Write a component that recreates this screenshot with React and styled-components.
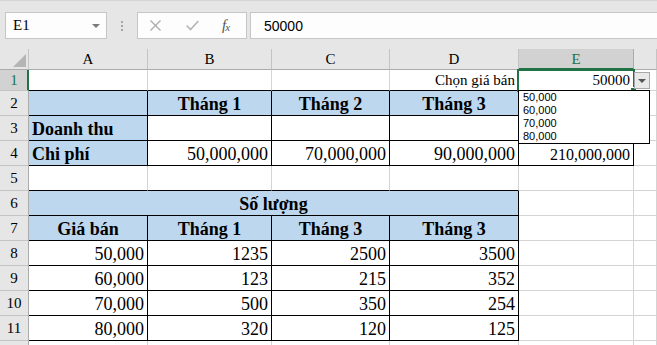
import React from 'react';
import styled, { createGlobalStyle } from 'styled-components';

const GRID = '#d4d4d4';
const HEAD_LINE = '#c4c4c4';
const GREEN = '#217346';
const BLUE = '#bdd7ee';

const GlobalStyle = createGlobalStyle`
  html, body { margin: 0; padding: 0; background: #fff; overflow: hidden; }
  body { font-family: "Liberation Serif", "Times New Roman", serif; color: #000; }
`;

const Page = styled.div`
  width: 657px;
  height: 345px;
  overflow: hidden;
  display: flex;
  flex-direction: column;
`;

/* ---------- formula bar ---------- */

const Toolbar = styled.div`
  height: 49px;
  flex: none;
  box-sizing: border-box;
  background: #e6e6e6;
  border-top: 1px solid #d6d6d6;
  padding-top: 11px;
  display: flex;
  align-items: flex-start;
`;

const NameBox = styled.div`
  margin-left: 5px;
  width: 102px;
  height: 27px;
  box-sizing: border-box;
  border: 1px solid #c6c6c6;
  background: #fdfdfd;
  display: flex;
  align-items: center;
  justify-content: space-between;
  padding: 0 6px 0 7px;
  font-size: 15px;
`;

const Grip = styled.div`
  width: 30px;
  height: 27px;
  display: flex;
  flex-direction: column;
  align-items: center;
  justify-content: center;
  gap: 2px;

  span {
    width: 2px;
    height: 2px;
    background: #a6a6a6;
  }
`;

const FxBox = styled.div`
  width: 110px;
  height: 27px;
  box-sizing: border-box;
  border: 1px solid #c6c6c6;
  background: #fdfdfd;
  display: flex;
  align-items: center;
  padding-left: 12px;
`;

const FxButton = styled.div`
  width: ${p => p.$w}px;
  display: flex;
  align-items: center;
`;

const FxLabel = styled.i`
  font-family: "Liberation Serif", serif;
  font-size: 15px;
  color: #555;
  letter-spacing: -1px;

  sub {
    font-size: 11px;
    vertical-align: -1px;
  }
`;

const FormulaInput = styled.div`
  flex: 1;
  margin-left: 3px;
  height: 27px;
  box-sizing: border-box;
  border: 1px solid #c6c6c6;
  border-right: none;
  background: #fdfdfd;
  display: flex;
  align-items: center;
  padding-left: 13px;
  font-family: "Liberation Sans", Arial, sans-serif;
  font-size: 14px;
`;

/* ---------- sheet ---------- */

const Sheet = styled.div`
  position: relative;
  display: grid;
  grid-template-columns: 29px 119px 124px 118px 129px 115px 1fr;
  grid-template-rows: 21px 21px repeat(11, 25px);
`;

const Corner = styled.div`
  box-sizing: border-box;
  background: #e6e6e6;
  border-right: 1px solid ${HEAD_LINE};
  border-bottom: 1px solid #ababab;
  display: flex;
  align-items: flex-end;
  justify-content: flex-end;
  padding: 0 2px 2px 0;
`;

const ColHead = styled.div`
  box-sizing: border-box;
  background: ${p => (p.$active ? '#d2d2d2' : '#e6e6e6')};
  color: ${p => (p.$active ? GREEN : '#000')};
  border-right: 1px solid ${p => (p.$active ? '#ababab' : HEAD_LINE)};
  border-bottom: ${p => (p.$active ? `2px solid ${GREEN}` : '1px solid #ababab')};
  display: flex;
  align-items: center;
  justify-content: center;
  font-size: 15px;
  line-height: 20px;
`;

const RowHead = styled.div`
  box-sizing: border-box;
  background: ${p => (p.$active ? '#d2d2d2' : '#e6e6e6')};
  color: ${p => (p.$active ? GREEN : '#000')};
  border-right: ${p => (p.$active ? `2px solid ${GREEN}` : '1px solid #ababab')};
  border-bottom: 1px solid ${HEAD_LINE};
  display: flex;
  align-items: center;
  justify-content: center;
  font-size: 15px;
  padding-left: ${p => (p.$active ? 1 : 0)}px;
`;

const JUSTIFY = { left: 'flex-start', center: 'center', right: 'flex-end' };

const Cell = styled.div`
  grid-column: span ${p => p.$span || 1};
  box-sizing: border-box;
  min-width: 0;
  border-right: 1px solid ${p => (p.$r ? '#000' : GRID)};
  border-bottom: 1px solid ${p => (p.$b ? '#000' : GRID)};
  background: ${p => (p.$fill ? BLUE : '#fff')};
  display: flex;
  align-items: flex-end;
  justify-content: ${p => JUSTIFY[p.$align || 'left']};
  padding: 0 3px 1px;
  font-size: ${p => p.$size || 18}px;
  line-height: ${p => (p.$size || 18) + 2}px;
  font-weight: ${p => (p.$bold ? 700 : 400)};
  white-space: nowrap;
`;

/* ---------- overlays ---------- */

const Selection = styled.div`
  position: absolute;
  left: 517px;
  top: 20px;
  width: 118px;
  height: 23px;
  box-sizing: border-box;
  border: 2px solid ${GREEN};
  pointer-events: none;

  &::after {
    content: '';
    position: absolute;
    right: -4px;
    bottom: -4px;
    width: 5px;
    height: 5px;
    background: ${GREEN};
    border: 1px solid #fff;
  }
`;

const DropButton = styled.div`
  position: absolute;
  left: 634px;
  top: 23px;
  width: 16px;
  height: 17px;
  box-sizing: border-box;
  border: 1px solid #a9a9a9;
  background: #e9e9e9;
  display: flex;
  align-items: center;
  justify-content: center;
`;

const DropList = styled.ul`
  position: absolute;
  left: 518px;
  top: 41px;
  width: 132px;
  margin: 0;
  padding: 0 0 0 4px;
  box-sizing: border-box;
  list-style: none;
  background: #fff;
  border: 1px solid #000;
  font-family: "Liberation Sans", Tahoma, sans-serif;
  font-size: 11px;
  line-height: 13px;
  z-index: 2;
`;

const Caret = ({ color = '#6d6d6d' }) => (
  <svg width="8" height="4" viewBox="0 0 8 4">
    <polygon points="0,0 8,0 4,4" fill={color} />
  </svg>
);

const COLS = ['A', 'B', 'C', 'D', 'E', 'F'];

const hdr = t => ({ t, bold: 1, align: 'center', fill: 1, r: 1, b: 1 });
const num = t => ({ t, align: 'right', r: 1, b: 1 });

const ROWS = [
  [{ b: 1 }, { b: 1 }, { b: 1 }, { t: 'Chọn giá bán', align: 'right', size: 15, b: 1 }, { t: '50000', align: 'right', size: 15 }, {}],
  [{ fill: 1, r: 1, b: 1 }, hdr('Tháng 1'), hdr('Tháng 2'), hdr('Tháng 3'), {}, {}],
  [{ t: 'Doanh thu', bold: 1, fill: 1, r: 1, b: 1 }, { r: 1, b: 1 }, { r: 1, b: 1 }, { r: 1, b: 1 }, { b: 1 }, {}],
  [{ t: 'Chi phí', bold: 1, fill: 1, r: 1, b: 1 }, num('50,000,000'), num('70,000,000'), num('90,000,000'), { ...num('210,000,000'), size: 16 }, {}],
  [{ b: 1 }, { b: 1 }, { b: 1 }, { b: 1 }, {}, {}],
  [{ ...hdr('Số lượng'), span: 4 }, {}, {}],
  [hdr('Giá bán'), hdr('Tháng 1'), hdr('Tháng 3'), hdr('Tháng 3'), {}, {}],
  [num('50,000'), num('1235'), num('2500'), num('3500'), {}, {}],
  [num('60,000'), num('123'), num('215'), num('352'), {}, {}],
  [num('70,000'), num('500'), num('350'), num('254'), {}, {}],
  [num('80,000'), num('320'), num('120'), num('125'), {}, {}],
  [{}, {}, {}, {}, {}, {}],
];

// only the top edge of row 12 is on screen, its number sits below the fold
const VISIBLE_LABELS = 11;

export default function App() {
  return (
    <Page>
      <GlobalStyle />
      <Toolbar>
        <NameBox>
          <span>E1</span>
          <Caret color="#7a7a7a" />
        </NameBox>
        <Grip>
          <span />
          <span />
          <span />
        </Grip>
        <FxBox>
          <FxButton $w={36}>
            <svg width="11" height="11" viewBox="0 0 11 11">
              <path d="M0.5 0.5 L10.5 10.5 M10.5 0.5 L0.5 10.5" stroke="#ababab" strokeWidth="1.3" fill="none" />
            </svg>
          </FxButton>
          <FxButton $w={36}>
            <svg width="13" height="11" viewBox="0 0 13 11">
              <path d="M0.7 5.5 L4.5 9.5 L12.3 1" stroke="#b5b5b5" strokeWidth="1.6" fill="none" />
            </svg>
          </FxButton>
          <FxButton $w={22}>
            <FxLabel>f<sub>x</sub></FxLabel>
          </FxButton>
        </FxBox>
        <FormulaInput>50000</FormulaInput>
      </Toolbar>

      <Sheet>
        <Corner>
          <svg width="13" height="13" viewBox="0 0 13 13">
            <polygon points="13,0 13,13 0,13" fill="#b5b5b5" />
          </svg>
        </Corner>
        {COLS.map(c => (
          <ColHead key={c} $active={c === 'E'}>{c === 'F' ? '' : c}</ColHead>
        ))}

        {ROWS.map((row, i) => (
          <React.Fragment key={i}>
            <RowHead $active={i === 0}>{i < VISIBLE_LABELS ? i + 1 : ''}</RowHead>
            {row.map((c, j) => (
              <Cell
                key={j}
                $span={c.span}
                $r={c.r}
                $b={c.b}
                $fill={c.fill}
                $bold={c.bold}
                $align={c.align}
                $size={c.size}
              >
                {c.t}
              </Cell>
            ))}
          </React.Fragment>
        ))}

        <Selection />
        <DropButton>
          <Caret color="#555" />
        </DropButton>
        <DropList>
          <li>50,000</li>
          <li>60,000</li>
          <li>70,000</li>
          <li>80,000</li>
        </DropList>
      </Sheet>
    </Page>
  );
}
